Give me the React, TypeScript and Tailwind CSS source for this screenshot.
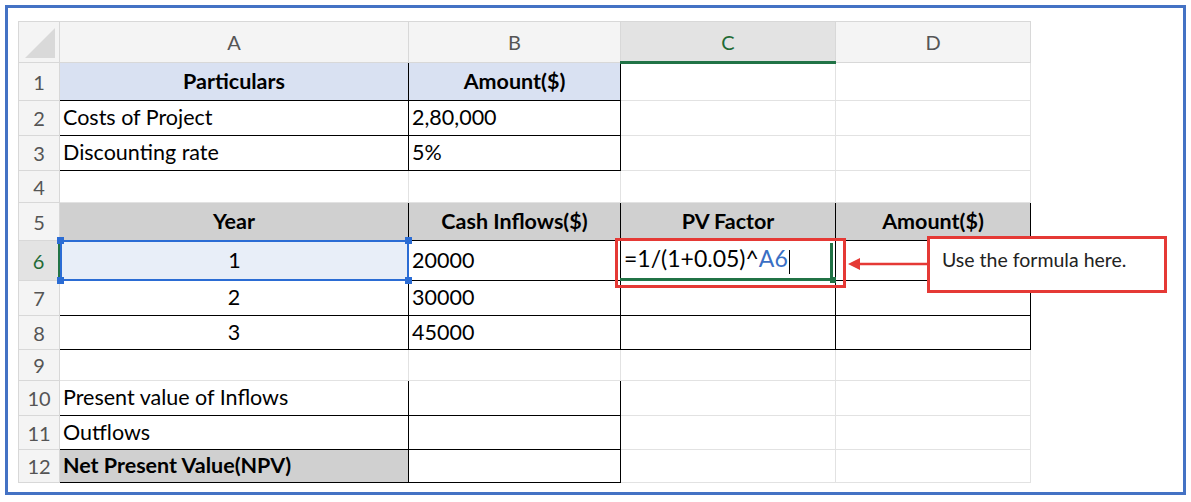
import React from "react";

const cols = [
  { l: "A", w: 349 },
  { l: "B", w: 212 },
  { l: "C", w: 215 },
  { l: "D", w: 195 },
];

const bd = "border-[1.5px] border-black";
const gl = "border border-[#e2e2e2]";

type Cell = { t?: string; cls?: string; bordered?: boolean };

const rows: { h: number; cells: Cell[] }[] = [
  {
    h: 38,
    cells: [
      { t: "Particulars", cls: "bg-[#d9e1f2] font-bold text-center", bordered: true },
      { t: "Amount($)", cls: "bg-[#d9e1f2] font-bold text-center", bordered: true },
      {},
      {},
    ],
  },
  { h: 35, cells: [{ t: "Costs of Project", bordered: true }, { t: "2,80,000", bordered: true }, {}, {}] },
  { h: 35, cells: [{ t: "Discounting rate", bordered: true }, { t: "5%", bordered: true }, {}, {}] },
  { h: 32, cells: [{}, {}, {}, {}] },
  {
    h: 38,
    cells: [
      { t: "Year", cls: "bg-[#d0d0d0] font-bold text-center", bordered: true },
      { t: "Cash Inflows($)", cls: "bg-[#d0d0d0] font-bold text-center", bordered: true },
      { t: "PV Factor", cls: "bg-[#d0d0d0] font-bold text-center", bordered: true },
      { t: "Amount($)", cls: "bg-[#d0d0d0] font-bold text-center", bordered: true },
    ],
  },
  { h: 40, cells: [{ t: "1", cls: "text-center", bordered: true }, { t: "20000", bordered: true }, { t: "F", bordered: true }, { bordered: true }] },
  { h: 35, cells: [{ t: "2", cls: "text-center", bordered: true }, { t: "30000", bordered: true }, { bordered: true }, { bordered: true }] },
  { h: 34, cells: [{ t: "3", cls: "text-center", bordered: true }, { t: "45000", bordered: true }, { bordered: true }, { bordered: true }] },
  { h: 31, cells: [{}, {}, {}, {}] },
  { h: 35, cells: [{ t: "Present value of Inflows", bordered: true }, { bordered: true }, {}, {}] },
  { h: 34, cells: [{ t: "Outflows", bordered: true }, { bordered: true }, {}, {}] },
  { h: 33, cells: [{ t: "Net Present Value(NPV)", cls: "bg-[#d0d0d0] font-bold", bordered: true }, { bordered: true }, {}, {}] },
];

export default function App() {
  return (
    <div className="w-[1191px] h-[502px] bg-white p-[5px]" style={{ fontFamily: "Lato, 'Liberation Sans', sans-serif" }}>
      <div className="relative h-[490px] border-[3px] border-[#4472c4] bg-white pl-[10px] pt-[13px] overflow-hidden">
        <table className="table-fixed border-collapse text-[21.5px] text-black">
          <colgroup>
            <col style={{ width: 41 }} />
            {cols.map((c) => (
              <col key={c.l} style={{ width: c.w }} />
            ))}
          </colgroup>
          <thead>
            <tr className="h-[41px]">
              <th className="bg-[#f4f4f4] border border-[#d8d8d8] relative">
                <div className="absolute right-[4px] bottom-[4px] w-0 h-0 border-l-[30px] border-l-transparent border-b-[30px] border-b-[#d9d9d9]" />
              </th>
              {cols.map((c) => (
                <th
                  key={c.l}
                  className={`font-normal text-[20px] border border-[#d8d8d8] ${
                    c.l === "C" ? "bg-[#e3e3e3] text-[#1f6b35] border-b-[3px] border-b-[#217346]" : "bg-[#f4f4f4] text-[#555]"
                  }`}
                >
                  {c.l}
                </th>
              ))}
            </tr>
          </thead>
          <tbody>
            {rows.map((r, i) => (
              <tr key={i} style={{ height: r.h }}>
                <td
                  className={`text-center text-[20px] border border-[#d8d8d8] ${
                    i === 5 ? "bg-[#e3e3e3] text-[#1f6b35] border-r-[3px] border-r-[#217346]" : "bg-[#f4f4f4] text-[#555]"
                  }`}
                >
                  {i + 1}
                </td>
                {r.cells.map((c, j) => {
                  const sel = i === 5 && j === 0;
                  return (
                    <td
                      key={j}
                      className={`px-[3px] leading-none whitespace-nowrap ${c.bordered ? bd : gl} ${c.cls ?? ""} ${
                        sel ? "bg-[#e8eef8] relative" : ""
                      }`}
                    >
                      {c.t === "F" ? (
                        <span className="text-[23px]">
                          =1/(1+0.05)^<span className="text-[#3a6fc4]">A6</span>
                          <span className="inline-block w-[1.5px] h-[24px] bg-black align-middle ml-[1px]" />
                        </span>
                      ) : (
                        c.t
                      )}
                      {sel && (
                        <>
                          <div className="absolute inset-[-1px] border-2 border-[#2b6cd4] pointer-events-none" />
                          <div className="absolute -left-[4px] -top-[4px] w-[7px] h-[7px] bg-[#2b6cd4]" />
                          <div className="absolute -right-[4px] -top-[4px] w-[7px] h-[7px] bg-[#2b6cd4]" />
                          <div className="absolute -left-[4px] -bottom-[4px] w-[7px] h-[7px] bg-[#2b6cd4]" />
                          <div className="absolute -right-[4px] -bottom-[4px] w-[7px] h-[7px] bg-[#2b6cd4]" />
                        </>
                      )}
                    </td>
                  );
                })}
              </tr>
            ))}
          </tbody>
        </table>

        {/* red highlight around C6 */}
        <div className="absolute left-[607px] top-[230px] w-[231px] h-[50px] border-[3px] border-[#e53935]">
          <div className="absolute left-[2px] top-[2px] w-[213px] h-[38px] border-b-[3px] border-r-[3px] border-[#217346]" />
          <div className="absolute left-[212px] top-[36px] w-[6px] h-[6px] bg-[#217346]" />
        </div>

        {/* arrow */}
        <div className="absolute left-[840px] top-[248px] w-[80px] h-[16px] flex items-center">
          <svg width="80" height="16" viewBox="0 0 80 16">
            <line x1="10" y1="8" x2="80" y2="8" stroke="#e53935" strokeWidth="2.5" />
            <polygon points="0,8 12,2 12,14" fill="#e53935" />
          </svg>
        </div>

        {/* callout */}
        <div className="absolute left-[919px] top-[228px] w-[240px] h-[57px] border-[3px] border-[#e53935] bg-white px-[12px] pt-[6px] text-[19.5px] text-[#222]">
          Use the formula here.
        </div>
      </div>
    </div>
  );
}
